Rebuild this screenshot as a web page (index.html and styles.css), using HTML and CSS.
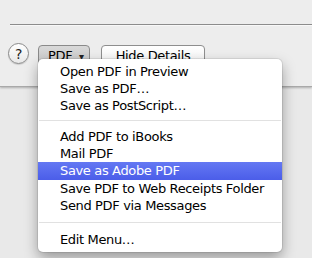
FILE: index.html
```html
<!DOCTYPE html>
<html lang="en">
<head>
    <meta charset="UTF-8">
    <title>Print - PDF menu</title>
    <link rel="stylesheet" href="styles.css">
</head>
<body>
    <div class="sheet">
        <div class="rule"></div>
        <div class="controls">
            <div class="help-btn">?</div>
            <div class="pdf-wrap">
                <div class="pdf-btn">PDF <span class="arrow">▾</span></div>
                <ul class="menu">
                    <li>Open PDF in Preview</li>
                    <li>Save as PDF…</li>
                    <li>Save as PostScript…</li>
                    <li class="sep"></li>
                    <li>Add PDF to iBooks</li>
                    <li>Mail PDF</li>
                    <li class="active">Save as Adobe PDF</li>
                    <li>Save PDF to Web Receipts Folder</li>
                    <li>Send PDF via Messages</li>
                    <li class="sep sep-last"></li>
                    <li>Edit Menu…</li>
                </ul>
            </div>
            <div class="btn">Hide Details</div>
        </div>
    </div>
</body>
</html>
```

FILE: styles.css
```css
* {
    margin: 0;
    padding: 0;
    box-sizing: border-box;
}

body {
    font-family: "DejaVu Sans", "Liberation Sans", sans-serif;
    font-size: 13px;
    letter-spacing: -0.35px;
    color: #000;
    background: #e9e9e9;
    width: 312px;
    height: 258px;
    overflow: hidden;
}

.sheet {
    height: 87px;
    background: #ededed;
    padding-top: 24px;
    border-bottom: 1px solid #a9a9a9;
    box-shadow: 0 1px 2px rgba(0,0,0,0.25);
}

.rule {
    margin-left: 10px;
    height: 1px;
    background: #8c8c8c;
    box-shadow: 0 1px 0 #f8f8f8;
}

.controls {
    display: flex;
    align-items: flex-start;
    margin-top: 20px;
    padding-left: 8px;
}

.help-btn {
    margin-top: -2px;
    width: 21px;
    height: 21px;
    border-radius: 50%;
    border: 1px solid #8a8a8a;
    background: linear-gradient(#ffffff, #e8e8e8);
    box-shadow: 0 1px 1px rgba(0,0,0,0.15);
    font-size: 14px;
    color: #222;
    display: flex;
    align-items: center;
    justify-content: center;
}

.pdf-wrap {
    position: relative;
    margin-left: 9px;
}

.pdf-btn {
    width: 52px;
    height: 21px;
    border: 1px solid #8a8a8a;
    border-radius: 4px;
    background: linear-gradient(#d9d9d9, #c6c6c6);
    padding-left: 9px;
    line-height: 19px;
}

.arrow {
    font-size: 10px;
    color: #222;
    margin-left: 3px;
}

.btn {
    margin-left: 11px;
    width: 104px;
    height: 21px;
    border: 1px solid #8e8e8e;
    border-radius: 4px;
    background: linear-gradient(#ffffff, #f1f1f1);
    box-shadow: 0 1px 1px rgba(0,0,0,0.1);
    text-align: center;
    line-height: 19px;
}

.menu {
    position: absolute;
    left: 0;
    top: 14px;
    width: 244px;
    list-style: none;
    background: #fff;
    border-radius: 5px;
    padding: 4px 0;
    box-shadow: 0 0 0 1px rgba(0,0,0,0.08), 0 6px 14px rgba(0,0,0,0.35);
}

.menu li {
    height: 17px;
    line-height: 17px;
    padding-left: 22px;
    white-space: nowrap;
}

.menu li.active {
    height: 18px;
    line-height: 18px;
    color: #fff;
    background: linear-gradient(#6478f3, #4b5de9);
}

.menu li.sep {
    height: 14px;
    position: relative;
}

.menu li.sep-last {
    height: 17px;
}

.menu li.sep::after {
    content: "";
    position: absolute;
    left: 1px;
    right: 1px;
    top: 6px;
    height: 1px;
    background: #e1e1e1;
}

.menu li.sep-last::after {
    top: 8px;
}
```
